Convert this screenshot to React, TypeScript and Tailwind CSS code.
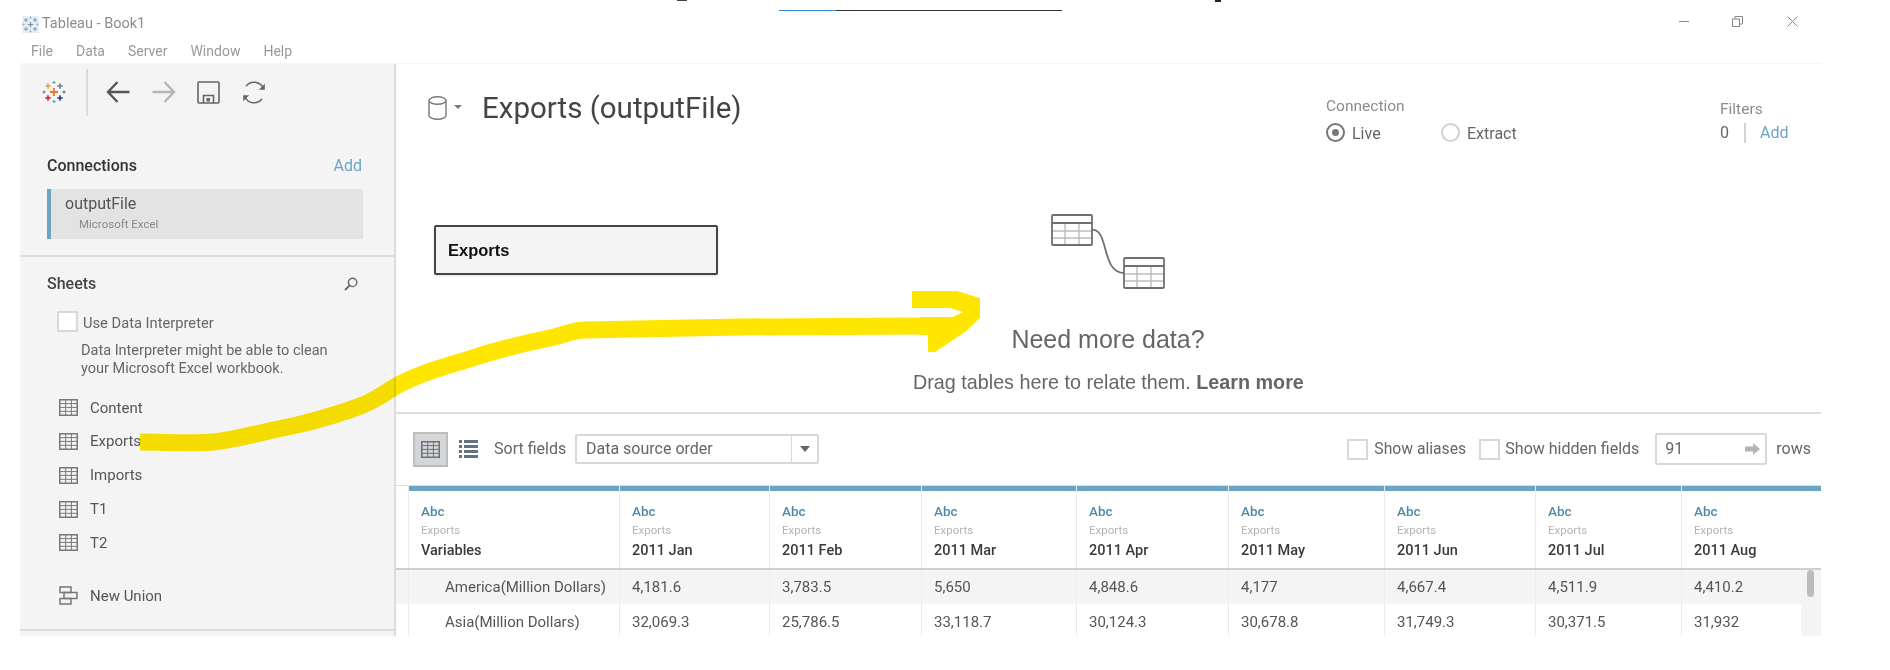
const FONT = "font-['Roboto','Liberation_Sans',sans-serif]";

const sheets = ["Content", "Exports", "Imports", "T1", "T2"];

const columns = [
  { name: "Variables", width: "w-[211px]" },
  { name: "2011 Jan", width: "w-[150px]" },
  { name: "2011 Feb", width: "w-[152px]" },
  { name: "2011 Mar", width: "w-[155px]" },
  { name: "2011 Apr", width: "w-[152px]" },
  { name: "2011 May", width: "w-[156px]" },
  { name: "2011 Jun", width: "w-[151px]" },
  { name: "2011 Jul", width: "w-[146px]" },
  { name: "2011 Aug", width: "w-[139px]" },
];

const rows = [
  ["America(Million Dollars)", "4,181.6", "3,783.5", "5,650", "4,848.6", "4,177", "4,667.4", "4,511.9", "4,410.2"],
  ["Asia(Million Dollars)", "32,069.3", "25,786.5", "33,118.7", "30,124.3", "30,678.8", "31,749.3", "30,371.5", "31,932"],
];

const Cross = ({ x, y, r, color, w = 1.6 }: { x: number; y: number; r: number; color: string; w?: number }) => (
  <path d={`M${x - r} ${y}H${x + r}M${x} ${y - r}V${y + r}`} stroke={color} strokeWidth={w} fill="none" />
);

const TableLogo = () => (
  <svg width="24" height="24" viewBox="0 0 24 24" className="shrink-0">
    <Cross x={12} y={12} r={4} color="#e8762b" w={1.8} />
    <Cross x={6} y={6} r={2.8} color="#eda13c" />
    <Cross x={18} y={6} r={2.8} color="#5b879b" />
    <Cross x={6} y={18} r={2.8} color="#c72037" />
    <Cross x={18} y={18} r={2.8} color="#1f447e" />
    <Cross x={12} y={2.5} r={1.6} color="#7099a6" w={1.2} />
    <Cross x={12} y={21.5} r={1.6} color="#7099a6" w={1.2} />
    <Cross x={2} y={12} r={1.6} color="#59879b" w={1.2} />
    <Cross x={22} y={12} r={1.6} color="#5b6591" w={1.2} />
  </svg>
);

const WindowIcon = () => (
  <svg width="17" height="17" viewBox="0 0 17 17" className="shrink-0 bg-[#e6edf3]">
    <Cross x={8.5} y={8.5} r={2.6} color="#6f8fa8" w={1.2} />
    <Cross x={4} y={4} r={2} color="#7f9cb3" w={1.1} />
    <Cross x={13} y={4} r={2} color="#7f9cb3" w={1.1} />
    <Cross x={4} y={13} r={2} color="#7f9cb3" w={1.1} />
    <Cross x={13} y={13} r={2} color="#7f9cb3" w={1.1} />
    <Cross x={8.5} y={1.6} r={1.2} color="#9fb5c6" w={1} />
    <Cross x={8.5} y={15.4} r={1.2} color="#9fb5c6" w={1} />
    <Cross x={1.6} y={8.5} r={1.2} color="#9fb5c6" w={1} />
    <Cross x={15.4} y={8.5} r={1.2} color="#9fb5c6" w={1} />
  </svg>
);

const GridIcon = ({ color = "#777" }: { color?: string }) => (
  <svg width="19" height="17" viewBox="0 0 19 17" className="shrink-0" fill="none" stroke={color} strokeWidth="1">
    <rect x="0.75" y="0.75" width="17.5" height="15.5" strokeWidth="1.5" />
    <path d="M1 4.6H18M1 8.4H18M1 12.3H18M6.7 1V16M12.4 1V16" />
  </svg>
);

const Checkbox = () => <span className="block size-[21px] shrink-0 border-2 border-[#d8d8d8] bg-white" />;

const SheetRow = ({ name }: { name: string }) => (
  <div className="flex h-[33.75px] items-center pl-[39px] text-[15px] text-[#555]">
    <GridIcon />
    <span className="ml-[12px]">{name}</span>
  </div>
);

const Sidebar = () => (
  <aside className="flex w-[376px] shrink-0 flex-col border-r-2 border-[#dcdcdc] bg-[#f4f4f4]">
    <div className="flex h-[56px] items-center">
      <div className="ml-[22px]">
        <TableLogo />
      </div>
      <span className="ml-[20px] h-[47px] w-[2px] bg-[#dcdcdc]" />
      <svg width="24" height="22" viewBox="0 0 24 22" className="ml-[18px]" fill="none" stroke="#555" strokeWidth="2.4">
        <path d="M23.5 11H2M11.5 1L2 11L11.5 21" />
      </svg>
      <svg width="24" height="22" viewBox="0 0 24 22" className="ml-[22px]" fill="none" stroke="#b5b5b5" strokeWidth="2.4">
        <path d="M0.5 11H22M12.5 1L22 11L12.5 21" />
      </svg>
      <svg width="23" height="23" viewBox="0 0 23 23" className="ml-[21px]" fill="none" stroke="#666" strokeWidth="1.6">
        <rect x="1" y="1" width="21" height="21" rx="1" />
        <path d="M6.5 22V14.5H16.5V22" />
        <rect x="9.5" y="17" width="3.5" height="3.5" fill="#666" stroke="none" />
      </svg>
      <svg width="24" height="23" viewBox="0 0 24 23" className="ml-[22px]" fill="none" stroke="#666" strokeWidth="1.5">
        <path d="M21.3 7.5A10 10 0 0 0 4 5.2M2.7 15.5A10 10 0 0 0 20 17.8" />
        <path d="M22.8 2.8V8.8H16.8Z" fill="#666" stroke="none" />
        <path d="M1.2 20.2V14.2H7.2Z" fill="#666" stroke="none" />
      </svg>
    </div>

    <div className="mt-[34px] flex h-[24px] items-center justify-between pl-[27px] pr-[32px]">
      <h2 className="text-[16px] font-medium text-[#333]">Connections</h2>
      <span className="text-[16px] text-[#6ba5c6]">Add</span>
    </div>
    <div className="ml-[27px] mt-[11px] flex h-[50px] w-[316px] flex-col border-l-4 border-[#6ba5c6] bg-[#e3e3e3] pl-[14px] pt-[4px]">
      <span className="text-[16px] leading-[22px] text-[#555]">outputFile</span>
      <span className="pl-[14px] text-[11.5px] leading-[18px] text-[#8a8a8a]">Microsoft Excel</span>
    </div>

    <div className="mt-[16px] border-t-2 border-[#dcdcdc]" />
    <div className="mt-[15px] flex h-[24px] items-center justify-between pl-[27px] pr-[36px]">
      <h2 className="text-[16px] font-medium text-[#444]">Sheets</h2>
      <svg width="14" height="14" viewBox="0 0 14 14" fill="none" stroke="#666" strokeWidth="1.4">
        <circle cx="8.6" cy="5.4" r="4.2" />
        <path d="M5.6 8.4L1 13" strokeWidth="1.8" />
      </svg>
    </div>
    <div className="ml-[37px] mt-[15px] flex h-[20px] items-center">
      <Checkbox />
      <span className="ml-[5px] pt-[5px] text-[14.7px] text-[#666]">Use Data Interpreter</span>
    </div>
    <p className="ml-[61px] mt-[11px] text-[14.5px] leading-[18px] text-[#666]">
      Data Interpreter might be able to clean
      <br />
      your Microsoft Excel workbook.
    </p>

    <div className="mt-[13px]">
      {sheets.map((name) => (
        <SheetRow key={name} name={name} />
      ))}
    </div>

    <div className="mt-[19px] flex h-[34px] items-center pl-[39px] text-[15px] text-[#555]">
      <svg width="19" height="19" viewBox="0 0 19 19" fill="none" stroke="#777" strokeWidth="1.5" className="shrink-0">
        <rect x="1" y="1" width="11" height="5.5" />
        <rect x="1" y="12.5" width="11" height="5.5" />
        <rect x="5" y="6.5" width="13" height="6" />
      </svg>
      <span className="ml-[12px]">New Union</span>
    </div>

    <div className="mt-[16px] border-t-2 border-[#dcdcdc]" />
  </aside>
);

const JoinHint = () => (
  <svg width="114" height="75" viewBox="0 0 114 75" className="mx-auto block" fill="none">
    <g stroke="#bdbdbd" strokeWidth="1.4">
      <path d="M1 17H41M1 24H41M14 9V31M28 9V31" />
      <path d="M73 60H113M73 67H113M86 52V74M100 52V74" />
    </g>
    <g stroke="#707070" strokeWidth="1.8">
      <rect x="1" y="1" width="40" height="30" rx="1" />
      <path d="M1 9H41" />
      <rect x="73" y="44" width="40" height="30" rx="1" />
      <path d="M73 52H113" />
      <path d="M41 16C58 14 50 59 73 59" />
    </g>
  </svg>
);

const DataGrid = () => (
  <div className="flex flex-col">
    <div className="flex h-[83px] border-t border-[#dcdcdc]">
      <div className="w-[13px] shrink-0 border-r border-[#ececec]" />
      {columns.map((col) => (
        <div key={col.name} className={`${col.width} flex shrink-0 flex-col border-r border-[#ececec] last:border-r-0`}>
          <div className="h-[5px] bg-[#6ba5c6]" />
          <div className="flex flex-col pl-[12px] pt-[11px]">
            <span className="text-[13.5px] font-medium leading-[19px] text-[#4f8ba6]">Abc</span>
            <span className="text-[11.5px] leading-[19px] text-[#b4b4b4]">Exports</span>
            <span className="mt-[1px] text-[14.5px] font-medium leading-[19px] text-[#3a3a3a]">{col.name}</span>
          </div>
        </div>
      ))}
    </div>
    <div className="relative border-t-2 border-[#cfcfcf]">
      {rows.map((row, r) => (
        <div key={row[0]} className={`flex ${r === 0 ? "h-[34px] bg-[#f4f4f4]" : "h-[36px] bg-white"}`}>
          <div className="w-[13px] shrink-0 border-r border-[#ececec]" />
          {row.map((value, c) => (
            <div
              key={c}
              className={`${columns[c].width} flex shrink-0 items-center border-r border-[#ececec] text-[15px] text-[#555] last:border-r-0 ${c === 0 ? "pl-[36px]" : "pl-[12px]"}`}
            >
              {value}
            </div>
          ))}
        </div>
      ))}
      <div className="absolute bottom-0 right-0 top-0 w-[20px] bg-[#f4f4f4]">
        <div className="ml-[6px] h-[27px] w-[7px] rounded-full bg-[#bcbcbc]" />
      </div>
    </div>
  </div>
);

const Main = () => (
  <main className="flex min-w-0 flex-1 flex-col overflow-hidden">
    <div className="flex h-[350px] shrink-0 flex-col border-b-2 border-[#dcdcdc]">
      <div className="flex h-[86px] shrink-0">
        <div className="flex h-[88px] items-center pl-[32px]">
          <svg width="19" height="24" viewBox="0 0 19 24" fill="none" stroke="#777" strokeWidth="1.4">
            <ellipse cx="9.5" cy="4.5" rx="8.5" ry="3.8" />
            <path d="M1 4.5V19.5C1 21.6 4.8 23.3 9.5 23.3S18 21.6 18 19.5V4.5" />
          </svg>
          <span className="ml-[7px] mt-[-2px] size-0 border-x-[4px] border-t-[4px] border-x-transparent border-t-[#777]" />
          <h1 className="ml-[20px] text-[29.5px] leading-[34px] text-[#444]">Exports (outputFile)</h1>
        </div>
        <div className="ml-auto w-[394px] shrink-0 pt-[32px]">
          <div className="text-[15.5px] leading-[20px] text-[#8c8c8c]">Connection</div>
          <div className="mt-[6px] flex h-[20px] items-center text-[16px] text-[#666]">
            <span className="flex size-[19px] items-center justify-center rounded-full border-2 border-[#777]">
              <span className="size-[7px] rounded-full bg-[#777]" />
            </span>
            <span className="ml-[7px] w-[89px] pt-[3px]">Live</span>
            <span className="size-[19px] rounded-full border-2 border-[#d0d0d0]" />
            <span className="ml-[7px] pt-[3px]">Extract</span>
          </div>
        </div>
        <div className="w-[101px] shrink-0 pt-[35px]">
          <div className="text-[15.5px] leading-[20px] text-[#8c8c8c]">Filters</div>
          <div className="mt-[4px] flex h-[20px] items-center text-[16px]">
            <span className="w-[24px] text-[#666]">0</span>
            <span className="h-[20px] w-[2px] bg-[#d4d4d4]" />
            <span className="ml-[14px] text-[#6ba5c6]">Add</span>
          </div>
        </div>
      </div>

      <div className="flex min-h-0 flex-1 items-start">
        <div className="ml-[38px] mt-[75px] flex h-[50px] w-[284px] shrink-0 items-center rounded-[2px] border-2 border-[#444] bg-[#f4f4f4] pl-[12px] font-['Liberation_Sans',sans-serif] text-[16.5px] font-bold text-[#111] shadow-sm">
          Exports
        </div>
        <div className="ml-[195px] w-[390px] shrink-0 pt-[64px] text-center font-['Liberation_Sans',sans-serif] text-[#666]">
          <JoinHint />
          <div className="mt-[35px] whitespace-nowrap text-[25px] leading-[30px]">Need more data?</div>
          <div className="mt-[15px] whitespace-nowrap text-[19.75px] leading-[26px]">
            Drag tables here to relate them. <b>Learn more</b>
          </div>
        </div>
      </div>
    </div>

    <div className="flex h-[71px] shrink-0 items-center pb-[1px] pl-[17px] pr-[10px]">
      <span className="flex size-[35px] items-center justify-center border-2 border-[#bdbdbd] bg-[#d6d6d6]">
        <GridIcon color="#5f7488" />
      </span>
      <svg width="19" height="18" viewBox="0 0 19 18" className="ml-[11px]" fill="#5f7488">
        <path d="M0 0H3V3H0ZM5 0H19V3H5ZM0 5H3V8H0ZM5 5H19V8H5ZM0 10H3V13H0ZM5 10H19V13H5ZM0 15H3V18H0ZM5 15H19V18H5Z" />
      </svg>
      <span className="ml-[16px] w-[81px] text-[16px] text-[#666]">Sort fields</span>
      <div className="flex h-[30px] w-[244px] shrink-0 items-center rounded-[2px] border-2 border-[#d8d8d8] bg-white text-[16px] text-[#666]">
        <span className="flex-1 pl-[9px]">Data source order</span>
        <span className="flex h-full w-[26px] items-center justify-center border-l border-[#d8d8d8]">
          <span className="size-0 border-x-[5px] border-t-[6px] border-x-transparent border-t-[#666]" />
        </span>
      </div>

      <span className="ml-auto">
        <Checkbox />
      </span>
      <span className="ml-[6px] w-[105px] text-[15.7px] text-[#666]">Show aliases</span>
      <Checkbox />
      <span className="ml-[5px] w-[150px] text-[16px] text-[#666]">Show hidden fields</span>
      <div className="flex h-[32px] w-[112px] shrink-0 items-center justify-between rounded-[2px] border-2 border-[#d8d8d8] pl-[8px] pr-[5px] text-[16px] text-[#666]">
        <span>91</span>
        <svg width="15" height="12" viewBox="0 0 15 12" fill="#b5b5b5">
          <path d="M0 3.5H8V0L15 6L8 12V8.5H0Z" />
        </svg>
      </div>
      <span className="ml-[9px] text-[16px] text-[#666]">rows</span>
    </div>

    <DataGrid />
  </main>
);

export default function App() {
  return (
    <div className={`relative h-[670px] w-[1890px] overflow-hidden bg-white ${FONT}`}>
      <div className="ml-[20px] w-[1801px]">
        <header className="flex h-[64px] flex-col border-b border-[#f6f6f6]">
          <div className="flex h-[33px] items-end pl-[2px]">
            <WindowIcon />
            <span className="ml-[3px] text-[14.5px] leading-[18px] text-[#8c8c8c]">Tableau - Book1</span>
            <div className="ml-auto flex h-[23px] items-center">
              <span className="h-px w-[10px] bg-[#888]" />
              <svg width="11" height="11" viewBox="0 0 11 11" className="ml-[43px]" fill="none" stroke="#888">
                <rect x="0.5" y="3" width="7" height="7.5" />
                <path d="M3 3V0.5H10.5V8H7.5" />
              </svg>
              <svg width="11" height="11" viewBox="0 0 11 11" className="ml-[44px] mr-[23px]" fill="none" stroke="#888">
                <path d="M0.5 0.5L10.5 10.5M10.5 0.5L0.5 10.5" />
              </svg>
            </div>
          </div>
          <nav className="mt-[8px] flex gap-[23px] pl-[11px] text-[14px] leading-[20px] text-[#999]">
            <span>File</span>
            <span>Data</span>
            <span>Server</span>
            <span>Window</span>
            <span>Help</span>
          </nav>
        </header>
        <div className="flex h-[572px] overflow-hidden">
          <Sidebar />
          <Main />
        </div>
      </div>

      {/* clipped line of text at the very top of the shot */}
      <div className="absolute left-[779px] top-[10px] h-[1px] w-[57px] bg-[#3b8ad0]" />
      <div className="absolute left-[836px] top-[10px] h-[1px] w-[226px] bg-[#333]" />
      <div className="absolute left-[677px] top-0 h-[1px] w-[10px] bg-[#444]" />
      <div className="absolute left-[1215px] top-0 h-[2px] w-[6px] bg-[#222]" />

      {/* hand drawn highlight */}
      <svg width="1890" height="670" viewBox="0 0 1890 670" className="pointer-events-none absolute left-0 top-0 mix-blend-multiply">
        <path
          d="M140 442C165 442 195 444 213 442C240 439 270 430 297 425C322 419 345 412 363 405C375 400 385 393 393 388C415 375 440 368 463 361C490 352 520 344 550 338C565 335 572 330 585 330L740 327L923 326"
          fill="none"
          stroke="#ffe600"
          strokeWidth="17"
        />
        <path d="M912 291H957L980 298V318L965 332L935 352H928V335H920V317L953 317L963 312L950 308H912Z" fill="#ffe600" />
      </svg>
    </div>
  );
}
